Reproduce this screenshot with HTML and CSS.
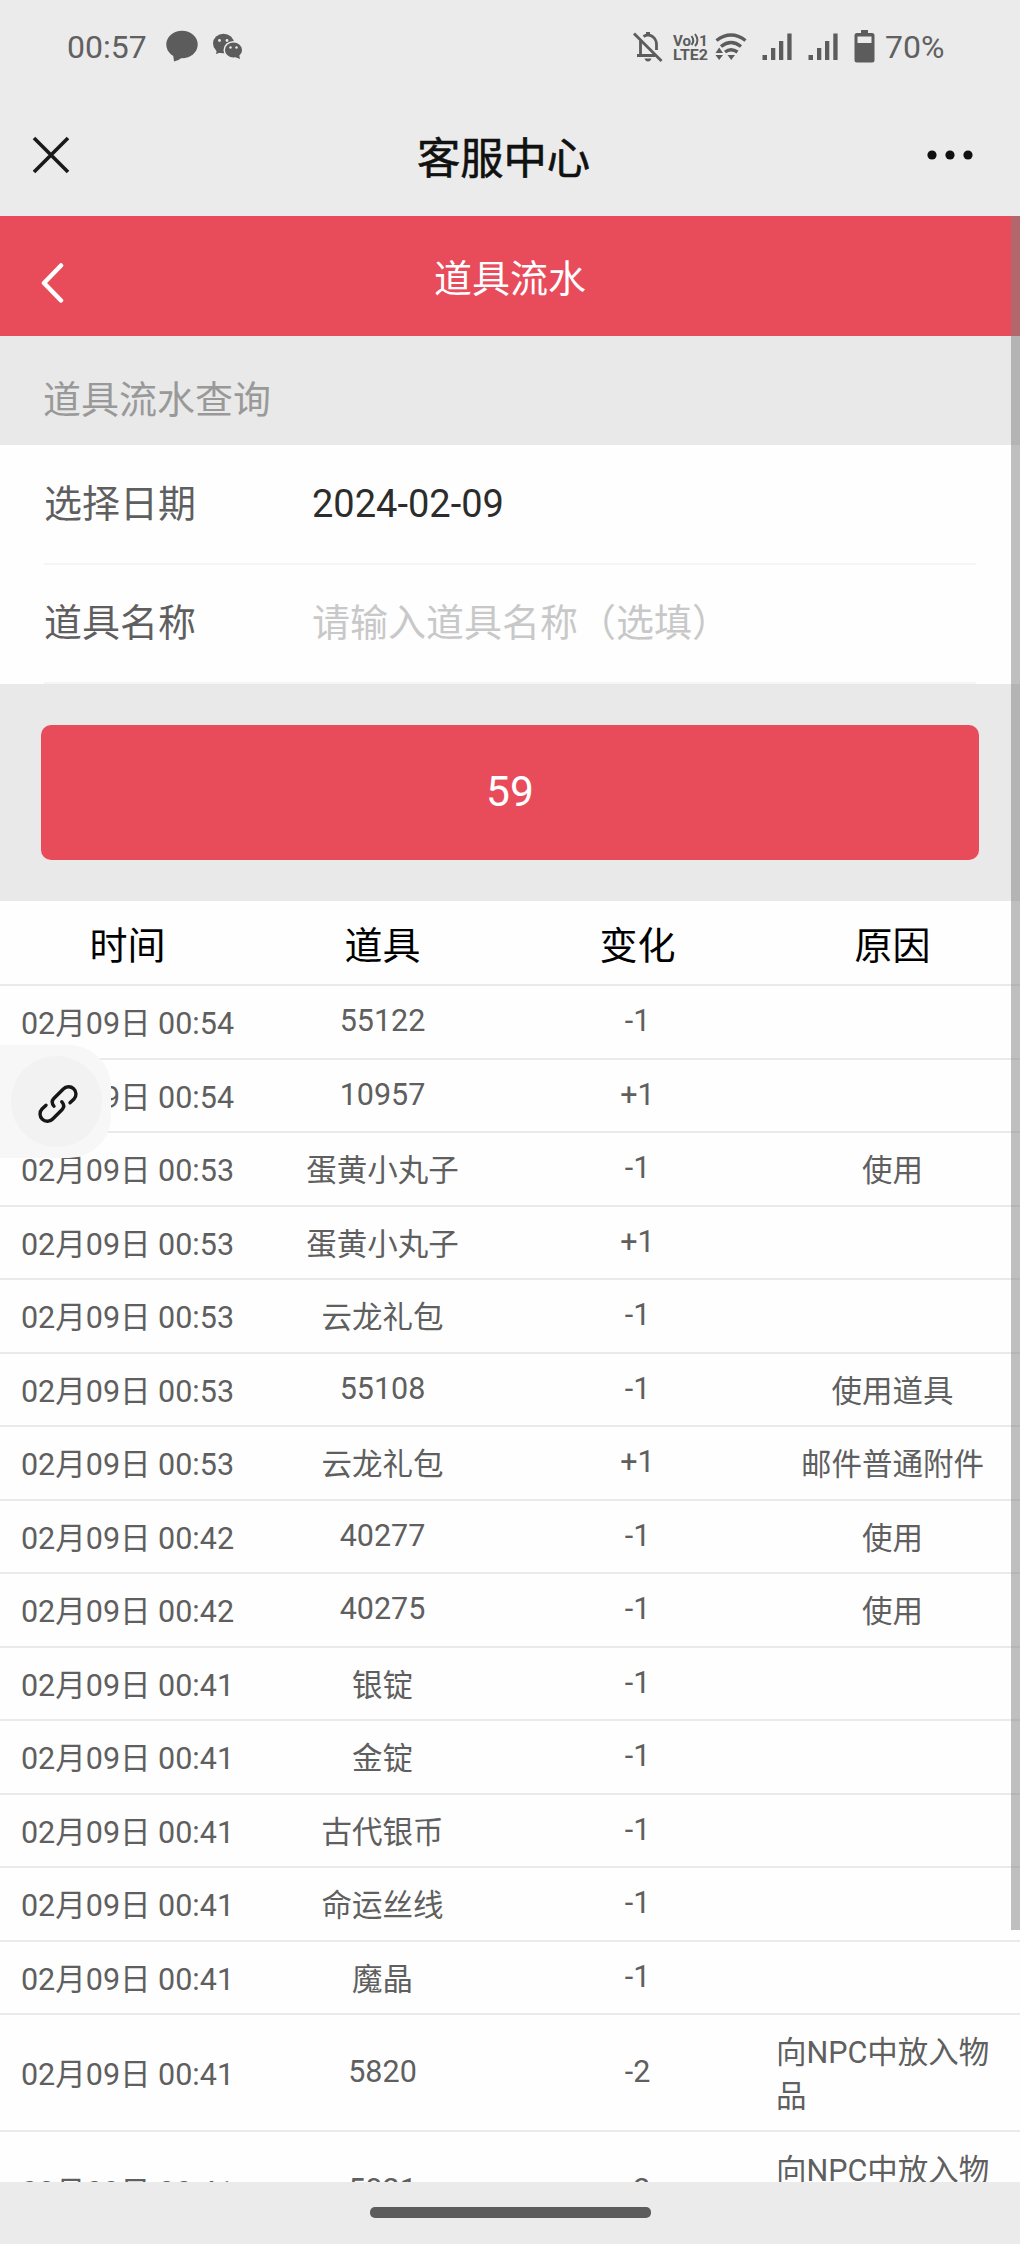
FILE: index.html
```
<!DOCTYPE html>
<html lang="zh-CN">

<head>
	<meta charset="utf-8" />
	<title>客服中心</title>
	<link rel="stylesheet" href="styles.css">
</head>

<body>
	<div class="status">
		<span class="clock">00:57</span>
		<svg class="ico-msg" width="34" height="36" viewBox="0 0 34 36">
			<ellipse cx="17" cy="15.5" rx="15.7" ry="13.7" />
			<path d="M8 25l1 7.500q5-1 8-4z" />
		</svg>
		<svg class="ico-wechat" width="32" height="36" viewBox="0 0 32 36">
			<path d="M5 20l-1 5 6-2z" />
			<ellipse cx="11.500" cy="14.500" rx="10.500" ry="9.800" />
			<ellipse class="ring" cx="21.500" cy="21" rx="9.300" ry="8.300" />
			<path d="M23 28l5 2-1-5z" />
			<g class="eye">
				<circle cx="7.500" cy="11.500" r="1.400" />
				<circle cx="15" cy="11.500" r="1.400" />
				<circle cx="18.500" cy="18.500" r="1.200" />
				<circle cx="24.500" cy="18.500" r="1.200" />
			</g>
		</svg>
		<div class="status-right">
			<svg width="32" height="36" viewBox="0 0 32 36">
				<path class="line" d="M8.500 12v14.500M5 26.500h18M11.500 7.500q4.500-3 9 0 4 3 4 8V21" />
				<path d="M14 3h4v4h-4zM12.500 29.500h7q-1 3-3.500 3t-3.500-3z" />
				<path class="line" d="M2 4.500L29.500 32" />
			</svg>
			<svg class="ico-volte" width="36" height="36" viewBox="0 0 36 36">
				<text x="0" y="16.500" textLength="18" lengthAdjust="spacingAndGlyphs">Vo</text>
				<path class="thin" d="M18.500 7q3.500 4.500 0 9M22 5q5 6.500 0 12" />
				<text x="26" y="16.500">1</text>
				<text x="0" y="31" textLength="35" lengthAdjust="spacingAndGlyphs">LTE2</text>
			</svg>
			<svg class="ico-wifi" width="32" height="36" viewBox="0 0 32 36">
				<path class="bold" d="M1.500 11.500Q16 0.500 30.500 11.500M6 17.500q10-8 20 0M10 23q6-4.500 12.500 0" />
				<path d="M12.500 26h7.500L16.200 31zM0.500 24h7.500L4.200 18.500zM0.500 26h7.500L4.200 31z" />
			</svg>
			<svg class="ico-signal" width="30" height="36" viewBox="0 0 30 36">
				<path d="M.5 26h4.500v5H.5zM9 19h4.300v12H9zM17 12h4.300v19H17zM25.300 4.500h4.300V31h-4.300z" />
			</svg>
			<svg class="ico-signal2" width="30" height="36" viewBox="0 0 30 36">
				<path d="M.5 26h4.500v5H.5zM9 19h4.300v12H9zM17 12h4.300v19H17zM25.300 4.500h4.300V31h-4.300z" />
			</svg>
			<svg class="ico-battery" width="21" height="36" viewBox="0 0 21 36">
				<path fill-rule="evenodd" d="M7 1h7v3h4q2.500 0 2.500 2.500V31q0 2.500-2.500 2.500H3Q.5 33.500.5 31V6.500Q.5 4 3 4h4zM3.500 7.500V14h14V7.500z" />
			</svg>
			<span class="power">70%</span>
		</div>
	</div>

	<div class="navbar">
		<svg class="close" width="38" height="38" viewBox="0 0 38 38">
			<path d="M2 2l34 34M36 2L2 36" />
		</svg>
		<h1>客服中心</h1>
		<svg class="more" width="46" height="10" viewBox="0 0 46 10">
			<circle cx="5" cy="5" r="4.600" />
			<circle cx="23" cy="5" r="4.600" />
			<circle cx="41" cy="5" r="4.600" />
		</svg>
	</div>

	<div class="page">
		<div class="header">
			<svg class="back" width="24" height="40" viewBox="0 0 24 40">
				<path d="M21 2.500L4 20l17 17.500" />
			</svg>
			<h2>道具流水</h2>
		</div>
		<div class="section">道具流水查询</div>
		<div class="form">
			<div class="field">
				<label>选择日期</label>
				<span class="value">2024-02-09</span>
			</div>
			<div class="field">
				<label>道具名称</label>
				<span class="holder">请输入道具名称（选填）</span>
			</div>
		</div>
		<div class="submit">
			<div class="btn">59</div>
		</div>
		<div class="list">
			<div class="row head"><div>时间</div><div>道具</div><div>变化</div><div>原因</div></div>
			<div class="row"><div>02月09日 00:54</div><div class="num">55122</div><div class="num">-1</div><div></div></div>
			<div class="row"><div>02月09日 00:54</div><div class="num">10957</div><div class="num">+1</div><div></div></div>
			<div class="row"><div>02月09日 00:53</div><div>蛋黄小丸子</div><div class="num">-1</div><div>使用</div></div>
			<div class="row"><div>02月09日 00:53</div><div>蛋黄小丸子</div><div class="num">+1</div><div></div></div>
			<div class="row"><div>02月09日 00:53</div><div>云龙礼包</div><div class="num">-1</div><div></div></div>
			<div class="row"><div>02月09日 00:53</div><div class="num">55108</div><div class="num">-1</div><div>使用道具</div></div>
			<div class="row"><div>02月09日 00:53</div><div>云龙礼包</div><div class="num">+1</div><div>邮件普通附件</div></div>
			<div class="row"><div>02月09日 00:42</div><div class="num">40277</div><div class="num">-1</div><div>使用</div></div>
			<div class="row"><div>02月09日 00:42</div><div class="num">40275</div><div class="num">-1</div><div>使用</div></div>
			<div class="row"><div>02月09日 00:41</div><div>银锭</div><div class="num">-1</div><div></div></div>
			<div class="row"><div>02月09日 00:41</div><div>金锭</div><div class="num">-1</div><div></div></div>
			<div class="row"><div>02月09日 00:41</div><div>古代银币</div><div class="num">-1</div><div></div></div>
			<div class="row"><div>02月09日 00:41</div><div>命运丝线</div><div class="num">-1</div><div></div></div>
			<div class="row"><div>02月09日 00:41</div><div>魔晶</div><div class="num">-1</div><div></div></div>
			<div class="row"><div>02月09日 00:41</div><div class="num">5820</div><div class="num">-2</div><div>向NPC中放入物品</div></div>
			<div class="row"><div>02月09日 00:41</div><div class="num">5821</div><div class="num">-2</div><div>向NPC中放入物品</div></div>
		</div>
		<!-- 滚动条 -->
		<div class="scrollbar"></div>
		<!-- 悬浮按钮 -->
		<div class="float">
			<div class="float-inner">
				<svg width="42" height="42" viewBox="0 0 42 42">
					<path d="M17 23.300Q13.500 19 16.800 15.500L26.300 6A7.200 7.200 0 0 1 37 16L33 19.800" />
					<path d="M24.700 18.700Q28.500 23 25.200 26.500L15.700 36A7.200 7.200 0 0 1 5 26L9 22.200" />
				</svg>
			</div>
		</div>
	</div>

	<div class="homebar"><i></i></div>
</body>

</html>
```
FILE: styles.css
```
* {
	margin: 0;
	padding: 0;
	box-sizing: border-box;
}

body {
	width: 1020px;
	height: 2244px;
	overflow: hidden;
	display: flex;
	flex-direction: column;
	background-color: #ebebeb;
	font-family: Roboto, "Noto Sans CJK SC", sans-serif;
	color: #5f5f5f;
}

h1,
h2 {
	font-weight: normal;
}

/*系统状态栏*/
.status {
	height: 94px;
	padding: 0 77px 0 67px;
	display: flex;
	align-items: center;
	font-size: 32px;
	color: #606060;
	flex: none;
}

.status svg {
	fill: #5c5c5c;
	flex: none;
}

.clock {
	width: 98px;
}

.ico-wechat {
	margin-left: 13px;
}

.status .ring {
	stroke: #ebebeb;
	stroke-width: 1.5;
}

.status .eye {
	fill: #ebebeb;
}

.status-right {
	margin-left: auto;
	display: flex;
	align-items: center;
}

.status .line {
	fill: none;
	stroke: #5c5c5c;
	stroke-width: 2.8;
}

.status .thin {
	fill: none;
	stroke: #5c5c5c;
	stroke-width: 2;
}

.status .bold {
	fill: none;
	stroke: #5c5c5c;
	stroke-width: 3.4;
}

.ico-volte {
	margin-left: 9px;
	font-size: 15.5px;
	font-weight: bold;
}

.ico-wifi {
	margin-left: 6px;
}

.ico-signal {
	margin-left: 15px;
}

.ico-signal2 {
	margin-left: 16px;
}

.ico-battery {
	margin-left: 16px;
}

.power {
	margin-left: 10px;
	width: 58px;
}

/*微信导航栏*/
.navbar {
	height: 122px;
	padding: 0 47px 0 32px;
	display: flex;
	align-items: center;
	justify-content: space-between;
	flex: none;
}

.navbar h1 {
	font-size: 43.3px;
	line-height: 60px;
	color: #111;
	padding: 10px 0 0 10px;
	-webkit-text-stroke: .6px #111;
}

.close {
	fill: none;
	stroke: #1a1a1a;
	stroke-width: 3.6;
}

.more {
	fill: #111;
}

/*网页内容*/
.page {
	position: relative;
	flex: 1;
	overflow: hidden;
	background-color: #e9e9e9;
}

.header {
	height: 120px;
	padding: 0 40px;
	display: flex;
	align-items: center;
	background-color: #e84c5a;
	color: #fff;
}

.header h2 {
	flex: 1;
	margin-right: 24px;
	text-align: center;
	font-size: 38px;
	line-height: 60px;
	padding-top: 6px;
}

.back {
	margin-top: 14px;
	fill: none;
	stroke: #fff;
	stroke-width: 4.5;
	stroke-linecap: round;
	stroke-linejoin: round;
}

.section {
	height: 109px;
	padding: 34px 43px 0;
	font-size: 38px;
	line-height: 60px;
	color: #999;
}

.form {
	height: 239px;
	padding: 0 44px;
	background-color: #fefefe;
}

.field {
	height: 119.5px;
	display: flex;
	align-items: center;
	border-bottom: 2px solid #f5f5f5;
	font-size: 38px;
	line-height: 60px;
}

.field label {
	width: 268px;
}

.value {
	color: #2c2c2c;
}

.holder {
	color: #c8c8c8;
}

.submit {
	height: 217px;
	padding: 41px;
}

.btn {
	height: 135px;
	border-radius: 10px;
	background-color: #e84c5a;
	color: #fff;
	font-size: 42.5px;
	line-height: 133px;
	text-align: center;
}

.list {
	background-color: #fefefe;
}

.row {
	min-height: 73.5px;
	padding: 16.3px 0 11.2px;
	display: grid;
	grid-template-columns: repeat(4, 255px);
	align-items: center;
	justify-items: center;
	border-bottom: 2px solid #eaeaea;
	font-size: 30.5px;
	line-height: 44px;
}

.row div {
	margin: 0 11px;
}

/*纯数字略微偏上*/
.row .num {
	line-height: 38px;
	padding-bottom: 6px;
}

.row.head {
	height: 85px;
	padding: 16px 0 10px;
	color: #000;
	font-size: 38px;
}

.scrollbar {
	position: absolute;
	top: 0;
	right: 0;
	width: 9px;
	height: 1714px;
	background-color: rgba(128, 128, 128, .5);
}

.float {
	position: absolute;
	top: 829px;
	left: 0;
	width: 111px;
	height: 113px;
	padding: 11px;
	border-radius: 0 42px 42px 0;
	background-color: #f7f7f7;
}

.float-inner {
	width: 91px;
	height: 91px;
	padding: 4px 0 0 2px;
	border-radius: 50%;
	background-color: #f2f2f2;
	display: flex;
	align-items: center;
	justify-content: center;
}

.float svg {
	fill: none;
	stroke: #161616;
	stroke-width: 3.4;
	stroke-linecap: round;
}

/*底部手势条*/
.homebar {
	height: 62px;
	flex: none;
	display: flex;
	justify-content: center;
	padding-top: 25px;
}

.homebar i {
	width: 281px;
	height: 11px;
	border-radius: 5px;
	background-color: #5c5c5c;
}
```
